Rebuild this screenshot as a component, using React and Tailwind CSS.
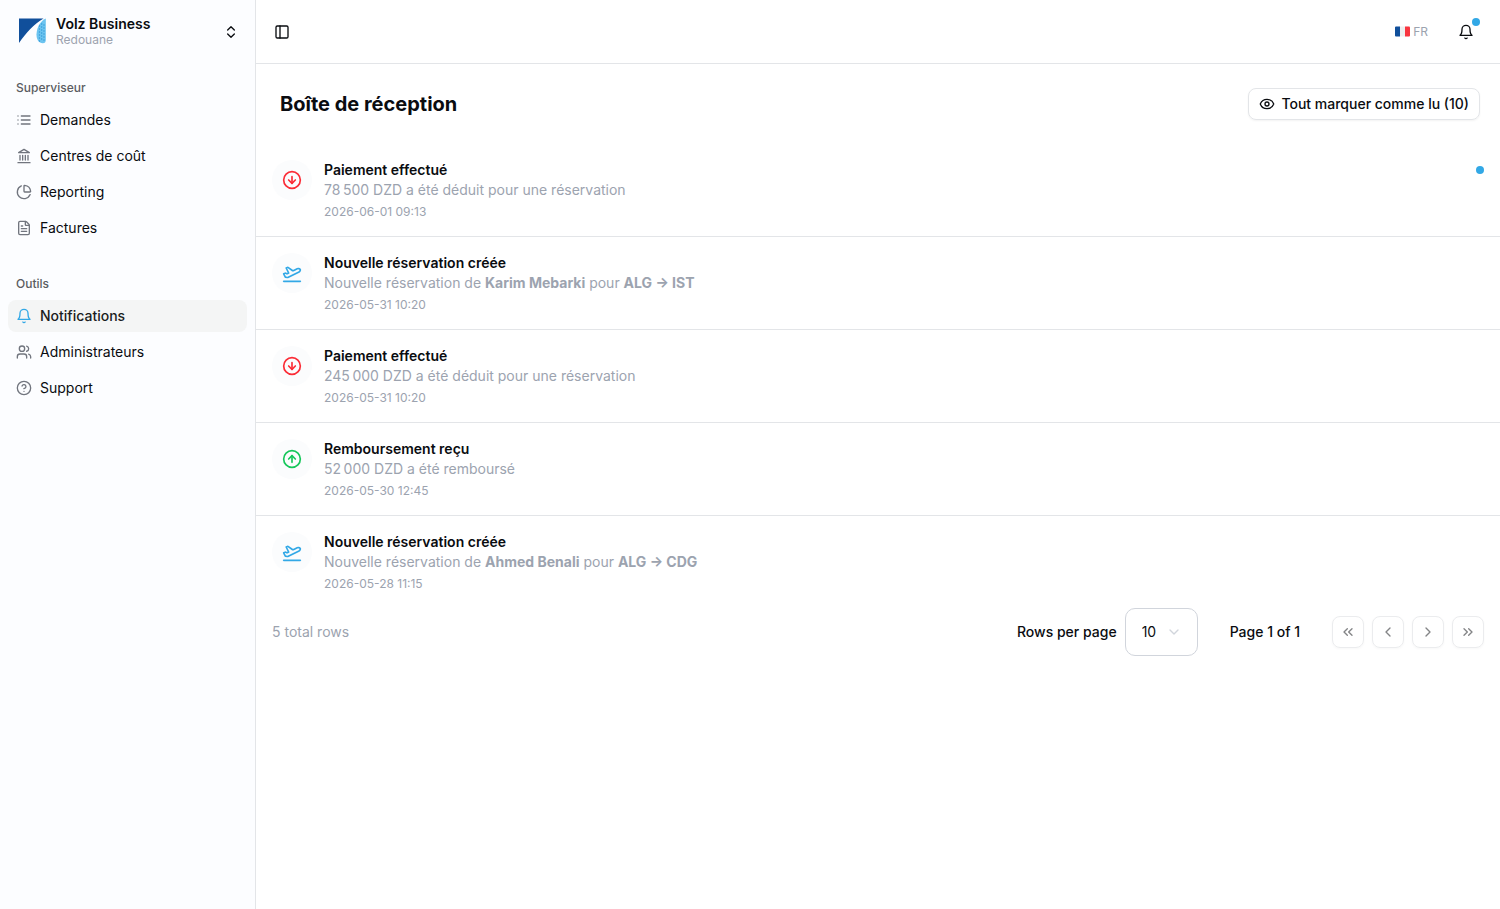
import React, { useState } from 'react';
import {
  ChevronDown,
  ChevronLeft,
  ChevronRight,
  ChevronsLeft,
  ChevronsRight,
  ChevronsUpDown,
  CircleArrowDown,
  CircleArrowUp,
  CircleHelp,
  Eye,
  FileText,
  PanelLeft,
  PlaneTakeoff,
  Users,
} from 'lucide-react';
import { LuChartPie } from 'react-icons/lu';

const LineIcon = ({ className, children }) => (
  <svg
    viewBox="0 0 24 24"
    className={className}
    fill="none"
    stroke="currentColor"
    strokeWidth="2"
    strokeLinecap="round"
    strokeLinejoin="round"
    aria-hidden="true"
  >
    {children}
  </svg>
);

const ListIcon = ({ className }) => (
  <LineIcon className={className}>
    <path d="M8 6h13M8 12h13M8 18h13M3 6h.01M3 12h.01M3 18h.01" />
  </LineIcon>
);

const BankIcon = ({ className }) => (
  <LineIcon className={className}>
    <path d="M3 22h18M6 18v-7M10 18v-7M14 18v-7M18 18v-7M12 2l8 5H4z" />
  </LineIcon>
);

const BellIcon = ({ className }) => (
  <LineIcon className={className}>
    <path d="M6 8a6 6 0 0 1 12 0c0 7 3 9 3 9H3s3-2 3-9" />
    <path d="M10.3 21a1.94 1.94 0 0 0 3.4 0" />
  </LineIcon>
);

const navGroups = [
  {
    label: 'Superviseur',
    items: [
      { name: 'Demandes', icon: ListIcon },
      { name: 'Centres de coût', icon: BankIcon },
      { name: 'Reporting', icon: LuChartPie },
      { name: 'Factures', icon: FileText },
    ],
  },
  {
    label: 'Outils',
    items: [
      { name: 'Notifications', icon: BellIcon, active: true },
      { name: 'Administrateurs', icon: Users },
      { name: 'Support', icon: CircleHelp },
    ],
  },
];

const notifications = [
  { id: 1, type: 'payment', text: '78\u202f500 DZD a été déduit pour une réservation', date: '2026-06-01 09:13', unread: true },
  { id: 2, type: 'booking', traveler: 'Karim Mebarki', route: 'ALG → IST', date: '2026-05-31 10:20' },
  { id: 3, type: 'payment', text: '245\u202f000 DZD a été déduit pour une réservation', date: '2026-05-31 10:20' },
  { id: 4, type: 'refund', text: '52\u202f000 DZD a été remboursé', date: '2026-05-30 12:45' },
  { id: 5, type: 'booking', traveler: 'Ahmed Benali', route: 'ALG → CDG', date: '2026-05-28 11:15' },
];

const types = {
  payment: { title: 'Paiement effectué', icon: CircleArrowDown, color: 'text-[#fb2c36]' },
  refund: { title: 'Remboursement reçu', icon: CircleArrowUp, color: 'text-[#16c75a]' },
  booking: { title: 'Nouvelle réservation créée', icon: PlaneTakeoff, color: 'text-[#32a8e6]' },
};

const Logo = () => (
  <svg viewBox="0 0 32 32" className="size-8 shrink-0" aria-hidden="true">
    <path d="M3 2.500h24.500C18 8 10 17 3 27z" fill="#104f9b" />
    <path d="M29.800 2.500v21.500c0 2-1 3.300-3 3.300-4 0-6.500-4-6.300-9C20.800 11 24.500 5 29.800 2.500z" fill="#6cc4f0" />
    <g fill="#2f97d6">
      {[8, 11, 14, 17, 20, 23].map((y) => (
        <React.Fragment key={y}>
          <circle cx="23.500" cy={y + 2} r="0.700" />
          <circle cx="25.700" cy={y} r="0.700" />
          <circle cx="28" cy={y + 1} r="0.700" />
        </React.Fragment>
      ))}
    </g>
  </svg>
);

const FlagFr = () => (
  <svg viewBox="0 0 15 11" className="h-[11px] w-[15px]" aria-hidden="true">
    <path d="M1 .5h4v10H1a1 1 0 0 1-1-1v-8a1 1 0 0 1 1-1z" fill="#104f9b" />
    <path d="M5 .5h5v10H5z" fill="#eeeeee" />
    <path d="M10 .5h4a1 1 0 0 1 1 1v8a1 1 0 0 1-1 1h-4z" fill="#f8353f" />
  </svg>
);

const Sidebar = () => (
  <aside className="w-64 shrink-0 border-r border-[#e3e5e8] bg-[#fcfdff]">
    <button type="button" className="flex h-16 w-full items-center gap-2 px-4 text-left">
      <Logo />
      <span className="flex-1">
        <span className="block text-sm leading-4 font-semibold">Volz Business</span>
        <span className="block text-xs leading-4 text-[#9ca3af]">Redouane</span>
      </span>
      <ChevronsUpDown className="size-4" />
    </button>
    <nav className="flex flex-col gap-2">
      {navGroups.map((group) => (
        <div key={group.label} className="p-2">
          <h2 className="flex h-8 items-center px-2 text-xs font-medium text-[#5a5c61]">{group.label}</h2>
          <ul className="flex flex-col gap-1">
            {group.items.map(({ name, icon: Icon, active }) => (
              <li key={name}>
                <a
                  href="#"
                  className={`flex h-8 items-center gap-2 rounded-lg px-2 text-sm ${active ? 'bg-[#f4f5f5] font-medium text-[#1b1d21]' : ''}`}
                >
                  <Icon className={`size-4 shrink-0 ${active ? 'text-[#32a8e6]' : 'text-[#71757e]'}`} />
                  {name}
                </a>
              </li>
            ))}
          </ul>
        </div>
      ))}
    </nav>
  </aside>
);

const TopBar = () => (
  <header className="flex h-16 items-center justify-between border-b border-[#e3e5e8] pr-4 pl-3">
    <button type="button" aria-label="Menu" className="flex size-7 items-center justify-center">
      <PanelLeft className="size-4" />
    </button>
    <div className="flex items-center gap-5">
      <button type="button" className="flex items-center gap-[3px] text-xs text-[#9ca3af]">
        <FlagFr />
        FR
      </button>
      <button type="button" aria-label="Notifications" className="relative flex size-9 items-center justify-center">
        <BellIcon className="size-4" />
        <span className="absolute top-1 right-1 size-2 rounded-full bg-[#32a8e6]" />
      </button>
    </div>
  </header>
);

const NotificationRow = ({ item }) => {
  const { title, icon: Icon, color } = types[item.type];
  return (
    <li className="flex items-start gap-3 border-b border-[#e3e5e8] p-4 last:border-b-0">
      <div className="flex size-10 shrink-0 items-center justify-center rounded-full bg-[#fbfcfd]">
        <Icon className={`size-5 ${color}`} />
      </div>
      <div className="flex-1">
        <h3 className="text-sm font-semibold">{title}</h3>
        <p className="text-sm text-[#9ca3af]">
          {item.text || (
            <>
              Nouvelle réservation de <strong>{item.traveler}</strong> pour <strong>{item.route}</strong>
            </>
          )}
        </p>
        <time className="mt-1 block text-xs text-[#9ca3af]">{item.date}</time>
      </div>
      {item.unread && <span className="mt-1.5 size-2 rounded-full bg-[#32a8e6]" />}
    </li>
  );
};

const pagers = [
  { label: 'Première page', icon: ChevronsLeft },
  { label: 'Page précédente', icon: ChevronLeft },
  { label: 'Page suivante', icon: ChevronRight },
  { label: 'Dernière page', icon: ChevronsRight },
];

const Pagination = () => {
  const [pageSize, setPageSize] = useState('10');

  return (
    <div className="flex items-center justify-between px-4 text-sm">
      <p className="text-[#9ca3af]">5 total rows</p>
      <div className="flex items-center gap-8 font-medium">
        <div className="flex items-center gap-2">
          <label htmlFor="page-size">Rows per page</label>
          <div className="relative">
            <select
              id="page-size"
              value={pageSize}
              onChange={(e) => setPageSize(e.target.value)}
              className="block h-12 w-[73px] appearance-none rounded-[10px] border border-gray-300 bg-white px-4 font-normal"
            >
              <option>10</option>
              <option>20</option>
              <option>50</option>
            </select>
            <ChevronDown className="pointer-events-none absolute top-4 right-4 size-4 text-gray-300" />
          </div>
        </div>
        <span>Page 1 of 1</span>
        <div className="flex gap-2">
          {pagers.map(({ label, icon: Icon }) => (
            <button
              key={label}
              type="button"
              aria-label={label}
              disabled
              className="flex size-8 items-center justify-center rounded-lg border border-[#d8dade] opacity-50 shadow-xs"
            >
              <Icon className="size-4" />
            </button>
          ))}
        </div>
      </div>
    </div>
  );
};

const App = () => (
  <div className="flex min-h-screen bg-white font-[Inter,sans-serif] text-[#0a0c10]">
    <Sidebar />
    <main className="min-w-0 flex-1">
      <TopBar />
      <div className="flex items-center justify-between py-6 pr-5 pl-6">
        <h1 className="text-xl font-bold">Boîte de réception</h1>
        <button
          type="button"
          className="flex h-8 items-center gap-1.5 rounded-lg border border-[#e3e5e8] px-2.5 text-sm font-medium shadow-xs"
        >
          <Eye className="size-4" />
          Tout marquer comme lu (10)
        </button>
      </div>
      <ul>
        {notifications.map((item) => (
          <NotificationRow key={item.id} item={item} />
        ))}
      </ul>
      <Pagination />
    </main>
  </div>
);

export default App;
